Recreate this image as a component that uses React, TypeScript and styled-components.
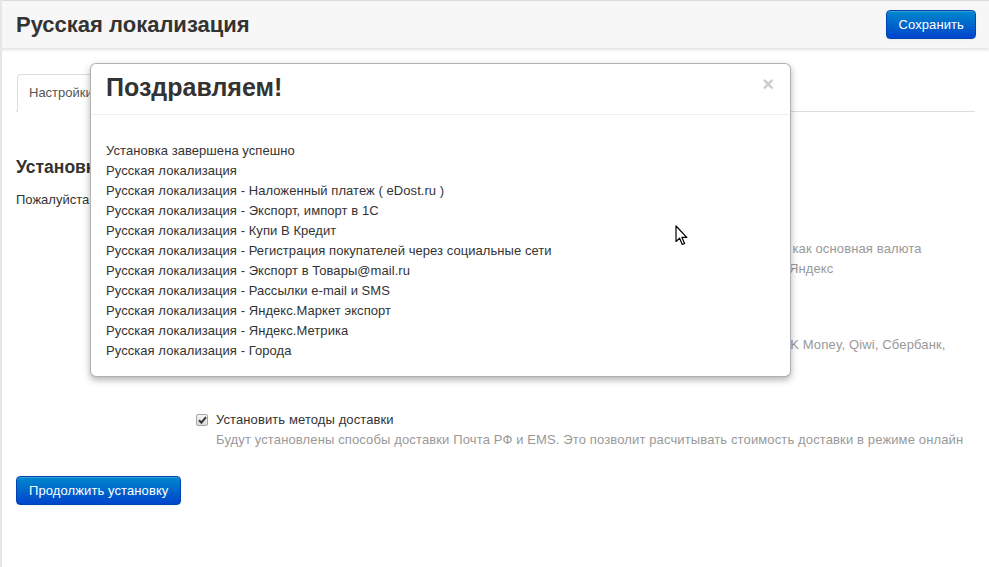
import React from "react";
import styled, { createGlobalStyle } from "styled-components";

const GlobalStyle = createGlobalStyle`
  html, body { margin: 0; padding: 0; background: #fff; }
  body {
    font-family: "Liberation Sans", Arial, Helvetica, sans-serif;
    font-size: 13px;
    line-height: 20px;
    color: #333;
  }
  * { box-sizing: border-box; }
`;

const Page = styled.div`
  position: relative;
  width: 989px;
  height: 567px;
  overflow: hidden;
  border-left: 2px solid #e6e6e6;
`;

const Header = styled.header`
  height: 48px;
  margin-left: -2px;
  border-top: 1px solid #dcdcdc;
  background: #f7f7f7;
  box-shadow: 0 2px 3px rgba(0, 0, 0, 0.12);
  display: flex;
  align-items: center;
  justify-content: space-between;
  padding: 0 13px 0 16px;
`;

const PageTitle = styled.h1`
  margin: 0;
  font-size: 22px;
  font-weight: bold;
  line-height: 30px;
  color: #333;
`;

const PrimaryButton = styled.button<{ $compact?: boolean }>`
  height: 29px;
  padding: 0 ${(p) => (p.$compact ? "11px" : "12px")};
  border: 1px solid #0044b3;
  border-radius: 4px;
  background: linear-gradient(to bottom, #0088cc, #0044cc);
  color: #fff;
  font-family: inherit;
  font-size: 13px;
  line-height: 20px;
  letter-spacing: 0.1px;
  box-shadow: inset 0 1px 0 rgba(255, 255, 255, 0.2), 0 1px 2px rgba(0, 0, 0, 0.05);
  cursor: pointer;
`;

const Content = styled.main`
  padding: 0 14px 0 14px;
`;

const Tabs = styled.ul`
  list-style: none;
  margin: 26px 0 0 0;
  padding: 0 0 0 1px;
  display: flex;
  border-bottom: 1px solid #ddd;
`;

const Tab = styled.li<{ $active?: boolean }>`
  margin-bottom: -1px;
  padding: 8px 11px;
  line-height: 20px;
  color: #555;
  background: #fff;
  border: 1px solid ${(p) => (p.$active ? "#ddd" : "transparent")};
  border-bottom-color: transparent;
  border-radius: 4px 4px 0 0;
`;

const Section = styled.section`
  padding-top: 45px;
`;

const SectionTitle = styled.h3`
  margin: 0;
  font-size: 17.5px;
  line-height: 20px;
  font-weight: bold;
  color: #333;
`;

const Intro = styled.p`
  margin: 13px 0 0 0;
`;

const Form = styled.div`
  margin-top: 9px;
  display: flex;
  flex-direction: column;
  gap: 35.5px;
`;

const OptionRow = styled.div`
  margin-left: 180px;
  display: flex;
  align-items: flex-start;
`;

const CheckBox = styled.span`
  flex: none;
  width: 12px;
  height: 12px;
  margin-top: 4px;
  margin-right: 8px;
  border: 1px solid #a6a6a6;
  border-radius: 2px;
  background: linear-gradient(to bottom, #f4f4f4, #dcdcdc);
  display: flex;
  align-items: center;
  justify-content: center;
`;

const OptionText = styled.div`
  display: flex;
  flex-direction: column;
`;

const OptionLabel = styled.span`
  color: #333;
  letter-spacing: 0.1px;
`;

const OptionDesc = styled.span`
  color: #999;
  white-space: nowrap;
  letter-spacing: 0.13px;
`;

const Actions = styled.div`
  margin-top: 26px;
`;

const Modal = styled.div`
  position: absolute;
  left: 88px;
  top: 63px;
  width: 701px;
  background: #fff;
  border: 1px solid rgba(0, 0, 0, 0.3);
  border-radius: 6px;
  box-shadow: 0 3px 7px rgba(0, 0, 0, 0.3);
`;

const ModalHeader = styled.div`
  position: relative;
  padding: 8px 15px 12px 15px;
  border-bottom: 1px solid #eee;
`;

const ModalTitle = styled.h3`
  margin: 0;
  font-size: 25px;
  line-height: 30px;
  font-weight: bold;
  color: #333;
`;

const Close = styled.button`
  position: absolute;
  right: 16px;
  top: 10px;
  padding: 0;
  border: 0;
  background: none;
  font-family: inherit;
  font-size: 20px;
  font-weight: bold;
  line-height: 20px;
  color: #000;
  opacity: 0.2;
  cursor: pointer;
`;

const ModalBody = styled.div`
  padding: 26px 15px 15px 15px;
  display: flex;
  flex-direction: column;
`;

const LogLine = styled.div`
  line-height: 20px;
  color: #333;
  letter-spacing: 0.06px;
`;

const Cursor = styled.svg`
  position: absolute;
  left: 673px;
  top: 225px;
`;

const Check = () => (
  <svg width="9" height="8" viewBox="0 0 9 8">
    <path d="M1 4.2 L3.4 6.6 L8 1.2" fill="none" stroke="#333" strokeWidth="2" />
  </svg>
);

const log = [
  "Установка завершена успешно",
  "Русская локализация",
  "Русская локализация - Наложенный платеж ( eDost.ru )",
  "Русская локализация - Экспорт, импорт в 1С",
  "Русская локализация - Купи В Кредит",
  "Русская локализация - Регистрация покупателей через социальные сети",
  "Русская локализация - Экспорт в Товары@mail.ru",
  "Русская локализация - Рассылки e-mail и SMS",
  "Русская локализация - Яндекс.Маркет экспорт",
  "Русская локализация - Яндекс.Метрика",
  "Русская локализация - Города",
];

const options = [
  {
    label: "Установить валюту Рубль",
    desc: [
      "Будет установлен курс рубля по данным ЦБ РФ, а также российский рубль будет установлен как основная валюта",
      "магазина. Также будут загружены регионы, города и настройки для интеграции с сервисами Яндекс",
    ],
  },
  {
    label: "Установить методы оплаты",
    desc: [
      "Будут установлены все популярные в России методы оплаты: Яндекс.Деньги, Робокасса, RBK Money, Qiwi, Сбербанк,",
      "квитанция для оплаты в банке",
    ],
  },
  {
    label: "Установить методы доставки",
    desc: [
      "Будут установлены способы доставки Почта РФ и EMS. Это позволит расчитывать стоимость доставки в режиме онлайн",
    ],
  },
];

export default function App() {
  return (
    <>
      <GlobalStyle />
      <Page>
        <Header>
          <PageTitle>Русская локализация</PageTitle>
          <PrimaryButton $compact>Сохранить</PrimaryButton>
        </Header>
        <Content>
          <Tabs>
            <Tab $active>Настройки установки</Tab>
          </Tabs>
          <Section>
            <SectionTitle>Установка модуля</SectionTitle>
            <Intro>Пожалуйста, выберите что необходимо установить</Intro>
            <Form>
              {options.map((o) => (
                <OptionRow key={o.label}>
                  <CheckBox>
                    <Check />
                  </CheckBox>
                  <OptionText>
                    <OptionLabel>{o.label}</OptionLabel>
                    {o.desc.map((d) => (
                      <OptionDesc key={d}>{d}</OptionDesc>
                    ))}
                  </OptionText>
                </OptionRow>
              ))}
            </Form>
            <Actions>
              <PrimaryButton>Продолжить установку</PrimaryButton>
            </Actions>
          </Section>
        </Content>
        <Modal>
          <ModalHeader>
            <ModalTitle>Поздравляем!</ModalTitle>
            <Close>×</Close>
          </ModalHeader>
          <ModalBody>
            {log.map((l) => (
              <LogLine key={l}>{l}</LogLine>
            ))}
          </ModalBody>
        </Modal>
        <Cursor width="14" height="22" viewBox="0 0 14 22">
          <path
            d="M1 1 L1 16.5 L4.6 13.2 L7.3 19.5 L9.6 18.5 L7 12.4 L11.8 12.4 Z"
            fill="#fff"
            stroke="#000"
            strokeWidth="1.2"
            strokeLinejoin="round"
          />
        </Cursor>
      </Page>
    </>
  );
}
